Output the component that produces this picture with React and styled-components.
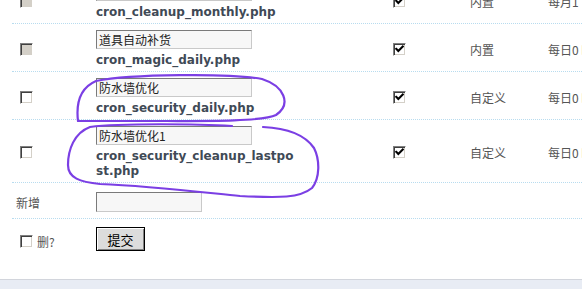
import React from 'react'
import styled, { createGlobalStyle } from 'styled-components'

const GlobalStyle = createGlobalStyle`
  html, body {
    margin: 0;
    padding: 0;
    background: #fff;
    overflow: hidden;
  }
  body {
    font-family: "DejaVu Sans", Verdana, "Noto Sans CJK SC", sans-serif;
    font-size: 12px;
    color: #4a4a4a;
  }
`

const Page = styled.div`
  position: relative;
  width: 582px;
  height: 289px;
  overflow: hidden;
  display: flex;
  flex-direction: column;
`

const Table = styled.div`
  margin-top: -24px;
  padding-left: 12px;
  width: 660px;
`

const Row = styled.div`
  display: grid;
  grid-template-columns: 80px 293px 81px 78px 1fr;
  border-bottom: ${p => (p.last ? 'none' : '1px dotted #b8dcef')};
  min-height: ${p => p.minHeight || 0}px;
`

const Cell = styled.div`
  display: flex;
  flex-direction: column;
  justify-content: ${p => (p.top ? 'flex-start' : 'center')};
  padding: ${p => p.pad || '6px 0 3px 4px'};
  font-family: "DejaVu Sans", "Noto Sans CJK SC", sans-serif;
  color: #555;
  white-space: nowrap;
`

const Label = styled.span`
  display: flex;
  align-items: center;
  gap: 4px;
  color: #555;
  font-family: "Noto Sans CJK SC", sans-serif;
  font-size: 12px;
`

const TitleInput = styled.input`
  box-sizing: border-box;
  width: ${p => p.w || 156}px;
  height: ${p => p.h || 19}px;
  margin: 0 0 ${p => (p.flat ? 0 : 4)}px;
  padding: 0 2px;
  border: 1px solid;
  border-color: #7a7a7a #c9c9c9 #c9c9c9 #7a7a7a;
  background: #f7f7f7;
  font-family: "Noto Sans CJK SC", sans-serif;
  font-size: 12px;
  color: #222;
  outline: none;
`

const FileName = styled.div`
  width: 204px;
  font-family: "DejaVu Sans", Verdana, sans-serif;
  font-weight: bold;
  font-size: 12px;
  line-height: 15px;
  color: #3f4a56;
  white-space: normal;
  word-break: break-all;
`

const Box = styled.span`
  box-sizing: border-box;
  display: inline-block;
  width: 13px;
  height: 13px;
  margin-left: 4px;
  flex: none;
  border: 1px solid;
  border-color: #808080 #ffffff #ffffff #808080;
  box-shadow: inset 1px 1px #404040, inset -1px -1px #d4d0c8;
  background: ${p => (p.disabled ? '#d4d0c8' : '#ffffff')};
  svg {
    display: block;
  }
`

const Button = styled.button`
  box-sizing: border-box;
  width: 49px;
  height: 24px;
  padding: 0;
  border: 1px solid #000;
  box-shadow: inset 1px 1px #ffffff, inset -1px -1px #808080;
  background: #dcdcdc;
  font-family: "Noto Sans CJK SC", sans-serif;
  font-size: 13px;
  color: #000;
`

const Footer = styled.div`
  margin-top: auto;
  height: 9px;
  border-top: 1px solid #d2d5dc;
  background: #e8ecf4;
`

const Overlay = styled.svg`
  position: absolute;
  left: 0;
  top: 0;
  pointer-events: none;
`

const Check = ({ checked, disabled }) => (
  <Box disabled={disabled}>
    {checked && (
      <svg width="11" height="11" viewBox="0 0 11 11">
        <path d="M2.2 4.8 L4.3 7 L8.8 2.4" fill="none" stroke="#000" strokeWidth="2" strokeLinecap="square" />
      </svg>
    )}
  </Box>
)

const crons = [
  { title: '清理每月主题', file: 'cron_cleanup_monthly.php', builtin: true, type: '内置', time: '每月1 日' },
  { title: '道具自动补货', file: 'cron_magic_daily.php', builtin: true, type: '内置', time: '每日0 时' },
  { title: '防水墙优化', file: 'cron_security_daily.php', builtin: false, type: '自定义', time: '每日0 时' },
  { title: '防水墙优化1', file: 'cron_security_cleanup_lastpost.php', builtin: false, type: '自定义', time: '每日0 时' },
]

const App = () => (
  <Page>
    <GlobalStyle />
    <Table>
      {crons.map(c => (
        <Row key={c.file}>
          <Cell><Check disabled={c.builtin} /></Cell>
          <Cell top>
            <TitleInput defaultValue={c.title} />
            <FileName>{c.file}</FileName>
          </Cell>
          <Cell><Check checked /></Cell>
          <Cell><Label>{c.type}</Label></Cell>
          <Cell><Label>{c.time}</Label></Cell>
        </Row>
      ))}
      <Row minHeight={35}>
        <Cell><Label>新增</Label></Cell>
        <Cell><TitleInput w={106} h={20} flat /></Cell>
      </Row>
      <Row last minHeight={60}>
        <Cell top pad="14px 0 0 4px">
          <Label><Check />删?</Label>
        </Cell>
        <Cell top pad="8px 0 0 4px">
          <Button>提交</Button>
        </Cell>
      </Row>
    </Table>
    <Footer />
    <Overlay width="582" height="289" viewBox="0 0 582 289">
      <path
        d="M78 121 C76 104 80 88 96 81 C130 74 230 73 262 79 C284 86 292 104 276 115 C262 122 200 121 150 121 C120 121 95 121 78 121"
        fill="none" stroke="#7b3fe4" strokeWidth="2.2" strokeLinecap="round"
      />
      <path
        d="M263 127 C286 128 305 135 314 148 C320 160 320 178 312 188 C300 198 280 198 240 196 C200 192 150 186 100 184 C80 182 68 178 68 165 C68 150 74 133 90 127 C120 123 200 124 232 126"
        fill="none" stroke="#7b3fe4" strokeWidth="2.2" strokeLinecap="round"
      />
    </Overlay>
  </Page>
)

export default App
